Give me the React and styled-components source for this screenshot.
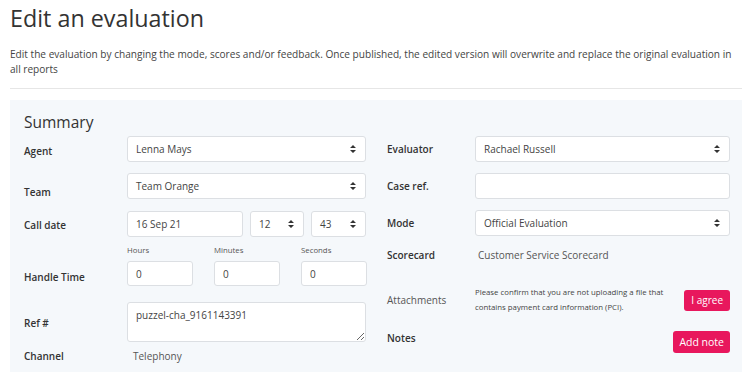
import React from "react";
import styled, { createGlobalStyle } from "styled-components";

const Global = createGlobalStyle`
  html, body { margin: 0; padding: 0; background: #fff; }
  body { font-family: "Open Sans", "Noto Sans", sans-serif; color: #333; }
  * { box-sizing: border-box; }
`;

const Page = styled.div`
  padding: 0 10px;
  width: 752px;
`;

const Title = styled.h1`
  margin: 0;
  padding-top: 2px;
  font-size: 23.3px;
  font-weight: 400;
  line-height: 32px;
  color: #333;
`;

const Intro = styled.p`
  margin: 13px 0 0;
  font-size: 10.1px;
  line-height: 15px;
  color: #444;
  padding-right: 2px;
`;

const Rule = styled.hr`
  margin: 11px 0 0;
  border: 0;
  border-top: 1px solid #e6e6e6;
`;

const Panel = styled.section`
  margin-top: 11px;
  background: #f5f8fb;
  padding: 11px 12px 20px 14px;
  display: grid;
  grid-template-columns: 342px 343px;
  column-gap: 21px;
  height: 290px;
`;

const Column = styled.div`
  display: flex;
  flex-direction: column;
`;

const Heading = styled.h2`
  margin: 0;
  font-size: 15.5px;
  font-weight: 400;
  line-height: 22px;
  color: #333;
  height: 25px;
`;

const Row = styled.div`
  display: grid;
  grid-template-columns: ${(p) => p.$label}px 1fr;
  align-items: center;
  margin-top: ${(p) => p.$mt || 0}px;
  min-height: ${(p) => p.$h || 26}px;
`;

const Label = styled.div`
  font-size: 10px;
  font-weight: ${(p) => (p.$plain ? 400 : 600)};
  color: ${(p) => (p.$plain ? "#555" : "#333")};
  padding-top: ${(p) => p.$pt || 0}px;
  padding-bottom: ${(p) => p.$pb || 0}px;
`;

const Field = styled.div`
  position: relative;
  height: ${(p) => p.$h || 26}px;
  width: ${(p) => (p.$w ? p.$w + "px" : "100%")};
  background: #fff;
  border: 1px solid #dcdfe3;
  border-radius: 3px;
  font-size: 10px;
  color: #444;
  display: flex;
  align-items: center;
  padding: 0 8px;
`;

const Arrows = styled.svg`
  position: absolute;
  right: 9px;
  top: 50%;
  margin-top: -4px;
`;

const Updown = () => (
  <Arrows width="6" height="8" viewBox="0 0 6 8">
    <path d="M3 0 L6 3 H0 Z M3 8 L0 5 H6 Z" fill="#333" />
  </Arrows>
);

const Select = ({ children, w }) => (
  <Field $w={w}>
    {children}
    <Updown />
  </Field>
);

const Inline = styled.div`
  display: flex;
  gap: ${(p) => p.$gap}px;
  align-items: center;
`;

const TimeGrid = styled.div`
  display: grid;
  grid-template-columns: 66px 66px 66px;
  column-gap: 21px;
`;

const TimeCell = styled.div`
  display: flex;
  flex-direction: column;
`;

const Tiny = styled.div`
  font-size: 7.8px;
  color: #555;
  line-height: 10px;
  height: 16px;
`;

const TextArea = styled.textarea`
  width: 100%;
  height: 40px;
  border: 1px solid #dcdfe3;
  border-radius: 3px;
  background: #fff;
  font-family: "Open Sans", sans-serif;
  font-size: 10px;
  color: #444;
  padding: 5px 8px;
  resize: vertical;
  display: block;
`;

const Value = styled.div`
  font-size: 10px;
  color: #555;
  padding-left: ${(p) => p.$pl || 0}px;
`;

const Note = styled.div`
  font-size: 7.8px;
  line-height: 15px;
  color: #444;
`;

const Between = styled.div`
  display: flex;
  align-items: center;
  justify-content: space-between;
`;

const Button = styled.button`
  background: #e8175d;
  color: #fff;
  border: 0;
  border-radius: 3px;
  font-family: "Open Sans", sans-serif;
  font-size: ${(p) => p.$fs || 10}px;
  height: ${(p) => p.$h || 22}px;
  padding: 0 ${(p) => p.$px || 7}px;
  cursor: pointer;
`;

export default function App() {
  return (
    <>
      <Global />
      <Page>
        <Title>Edit an evaluation</Title>
        <Intro>
          Edit the evaluation by changing the mode, scores and/or feedback. Once published, the edited
          version will overwrite and replace the original evaluation in all reports
        </Intro>
        <Rule />
        <Panel>
          <Column>
            <Heading>Summary</Heading>
            <Row $label={103}>
              <Label $pt={4}>Agent</Label>
              <Select>Lenna Mays</Select>
            </Row>
            <Row $label={103} $mt={11}>
              <Label $pt={12}>Team</Label>
              <Select>Team Orange</Select>
            </Row>
            <Row $label={103} $mt={12}>
              <Label $pt={2}>Call date</Label>
              <Inline $gap={7}>
                <Field $w={116}>16 Sep 21</Field>
                <Select w={54}>12</Select>
                <Select w={55}>43</Select>
              </Inline>
            </Row>
            <Row $label={103} $mt={8}>
              <Label $pt={22}>Handle Time</Label>
              <TimeGrid>
                <TimeCell>
                  <Tiny>Hours</Tiny>
                  <Field $h={25}>0</Field>
                </TimeCell>
                <TimeCell>
                  <Tiny>Minutes</Tiny>
                  <Field $h={25}>0</Field>
                </TimeCell>
                <TimeCell>
                  <Tiny>Seconds</Tiny>
                  <Field $h={25}>0</Field>
                </TimeCell>
              </TimeGrid>
            </Row>
            <Row $label={103} $mt={16}>
              <Label $pt={2}>Ref #</Label>
              <TextArea defaultValue="puzzel-cha_9161143391" />
            </Row>
            <Row $label={103} $mt={3} $h={22}>
              <Label>Channel</Label>
              <Value $pl={6}>Telephony</Value>
            </Row>
          </Column>
          <Column>
            <Heading />
            <Row $label={88}>
              <Label>Evaluator</Label>
              <Select>Rachael Russell</Select>
            </Row>
            <Row $label={88} $mt={11}>
              <Label>Case ref.</Label>
              <Field />
            </Row>
            <Row $label={88} $mt={11}>
              <Label>Mode</Label>
              <Select>Official Evaluation</Select>
            </Row>
            <Row $label={88} $mt={8} $h={22}>
              <Label>Scorecard</Label>
              <Value $pl={3}>Customer Service Scorecard</Value>
            </Row>
            <Row $label={88} $mt={19} $h={30}>
              <Label $plain>Attachments</Label>
              <Between>
                <Note>
                  Please confirm that you are not uploading a file that
                  <br />
                  contains payment card information (PCI).
                </Note>
                <Button $h={21}>I agree</Button>
              </Between>
            </Row>
            <Row $label={88} $mt={16} $h={22}>
              <Label $pb={8}>Notes</Label>
              <Between>
                <span />
                <Button $h={22} $fs={10.5} $px={6}>Add note</Button>
              </Between>
            </Row>
          </Column>
        </Panel>
      </Page>
    </>
  );
}
